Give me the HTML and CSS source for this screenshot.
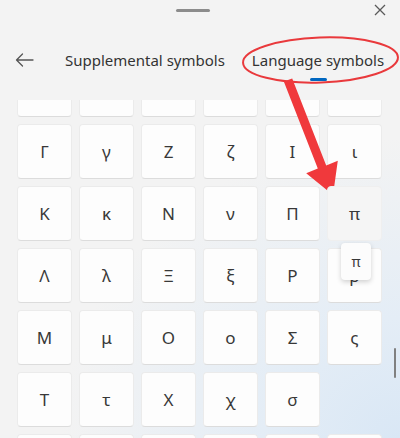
FILE: index.html
```html
<!DOCTYPE html>
<html>
<head>
    <title>Language symbols</title>
    <link rel="stylesheet" href="styles.css">
</head>
<body>
    <div class="panel">
        <div class="topbar">
            <span></span>
            <span class="handle"></span>
            <button class="close" aria-label="Close">
                <svg width="12" height="12" viewBox="0 0 12 12"><path d="M1 1L11 11M11 1L1 11" stroke="#5a5a5a" stroke-width="1.3" fill="none"/></svg>
            </button>
        </div>

        <nav class="tabs">
            <button class="back" aria-label="Back">
                <svg width="19" height="14" viewBox="0 0 19 14"><path d="M18 7H1.5M7.5 1L1.5 7L7.5 13" stroke="#555" stroke-width="1.3" fill="none" stroke-linejoin="round" stroke-linecap="round"/></svg>
            </button>
            <span class="tab">Supplemental symbols</span>
            <span class="tab active">Language symbols</span>
        </nav>

        <div class="viewport">
            <div class="grid">
                <div class="key">Β</div><div class="key">β</div><div class="key">Δ</div><div class="key">δ</div><div class="key">Ε</div><div class="key">ε</div>
                <div class="key">Γ</div><div class="key">γ</div><div class="key">Ζ</div><div class="key">ζ</div><div class="key">Ι</div><div class="key">ι</div>
                <div class="key">Κ</div><div class="key">κ</div><div class="key">Ν</div><div class="key">ν</div><div class="key">Π</div>
                <div class="key pressed">π<div class="popup">π</div></div>
                <div class="key">Λ</div><div class="key">λ</div><div class="key">Ξ</div><div class="key">ξ</div><div class="key">Ρ</div><div class="key">ρ</div>
                <div class="key">Μ</div><div class="key">μ</div><div class="key">Ο</div><div class="key">ο</div><div class="key">Σ</div><div class="key">ς</div>
                <div class="key">Τ</div><div class="key">τ</div><div class="key">Χ</div><div class="key">χ</div><div class="key">σ</div><div class="empty"></div>
                <div class="key">Υ</div><div class="key">υ</div><div class="key">Φ</div><div class="key">φ</div><div class="key">Ψ</div><div class="key">ψ</div>
            </div>
            <div class="scrollbar"></div>
        </div>

        <!-- annotation drawn over the screenshot -->
        <svg class="annotation" width="400" height="438" viewBox="0 0 400 438">
            <ellipse cx="320.5" cy="60" rx="77.5" ry="22.5" transform="rotate(-2 320.5 60)" fill="none" stroke="#e9393c" stroke-width="2"/>
            <polygon points="283.8,81.6 292.2,78.4 326.2,165.4 337.8,160.8 333,195 306.2,173.2 317.8,168.6" fill="#f0393c"/>
        </svg>
    </div>
</body>
</html>
```

FILE: styles.css
```css
body {
    margin: 0;
    font-family: "Noto Sans", "Open Sans", sans-serif;
    color: #2b2b2b;
}

.panel {
    position: relative;
    width: 400px;
    height: 438px;
    overflow: hidden;
    background: radial-gradient(ellipse 340px 300px at 100% 100%, #d9e7f5 0%, #e4edf6 40%, #f3f3f3 100%);
    background-color: #f3f3f3;
}

.topbar {
    display: grid;
    grid-template-columns: 1fr auto 1fr;
    align-items: center;
    height: 20px;
    padding: 0 14px 0 0;
}

.handle {
    display: block;
    width: 34px;
    height: 3px;
    border-radius: 2px;
    background-color: #8c8c8c;
}

.close {
    justify-self: end;
    display: flex;
    padding: 0;
    border: none;
    background: none;
}

.tabs {
    display: flex;
    align-items: center;
    height: 80px;
    padding: 0 0 0 15px;
    box-sizing: border-box;
}

.back {
    display: flex;
    flex-shrink: 0;
    padding: 0;
    margin: 0 31px 1px 0;
    border: none;
    background: none;
}

.tab {
    position: relative;
    flex-shrink: 0;
    white-space: nowrap;
    font-size: 15px;
    color: #333;
    margin-right: 27px;
}

.tab.active::after {
    content: "";
    position: absolute;
    left: 50%;
    bottom: -11px;
    width: 17px;
    height: 3px;
    margin-left: -8px;
    border-radius: 2px;
    background-color: #0067c0;
}

.viewport {
    height: 338px;
    overflow: hidden;
}

.grid {
    display: grid;
    grid-template-columns: repeat(6, 55px);
    grid-auto-rows: 55px;
    gap: 7px;
    margin-top: -38px;
    padding-left: 17px;
}

.key {
    position: relative;
    display: flex;
    align-items: center;
    justify-content: center;
    font-size: 17px;
    color: #383838;
    background-color: #fdfdfd;
    border: 1px solid #ebebeb;
    border-bottom-color: #dcdcdc;
    border-radius: 4px;
    box-sizing: border-box;
}

.key.pressed {
    background-color: #f5f5f5;
    border-color: #efefef;
    z-index: 2;
}

.popup {
    position: absolute;
    left: 13px;
    top: 56px;
    width: 30px;
    height: 37px;
    display: flex;
    align-items: center;
    justify-content: center;
    font-size: 14px;
    background-color: #fcfcfc;
    border-radius: 4px;
    box-shadow: 0 2px 5px rgba(0, 0, 0, 0.18);
}

.scrollbar {
    position: absolute;
    right: 4px;
    top: 348px;
    width: 2px;
    height: 30px;
    border-radius: 1px;
    background-color: #808080;
}

.annotation {
    position: absolute;
    left: 0;
    top: 0;
    pointer-events: none;
}
```
